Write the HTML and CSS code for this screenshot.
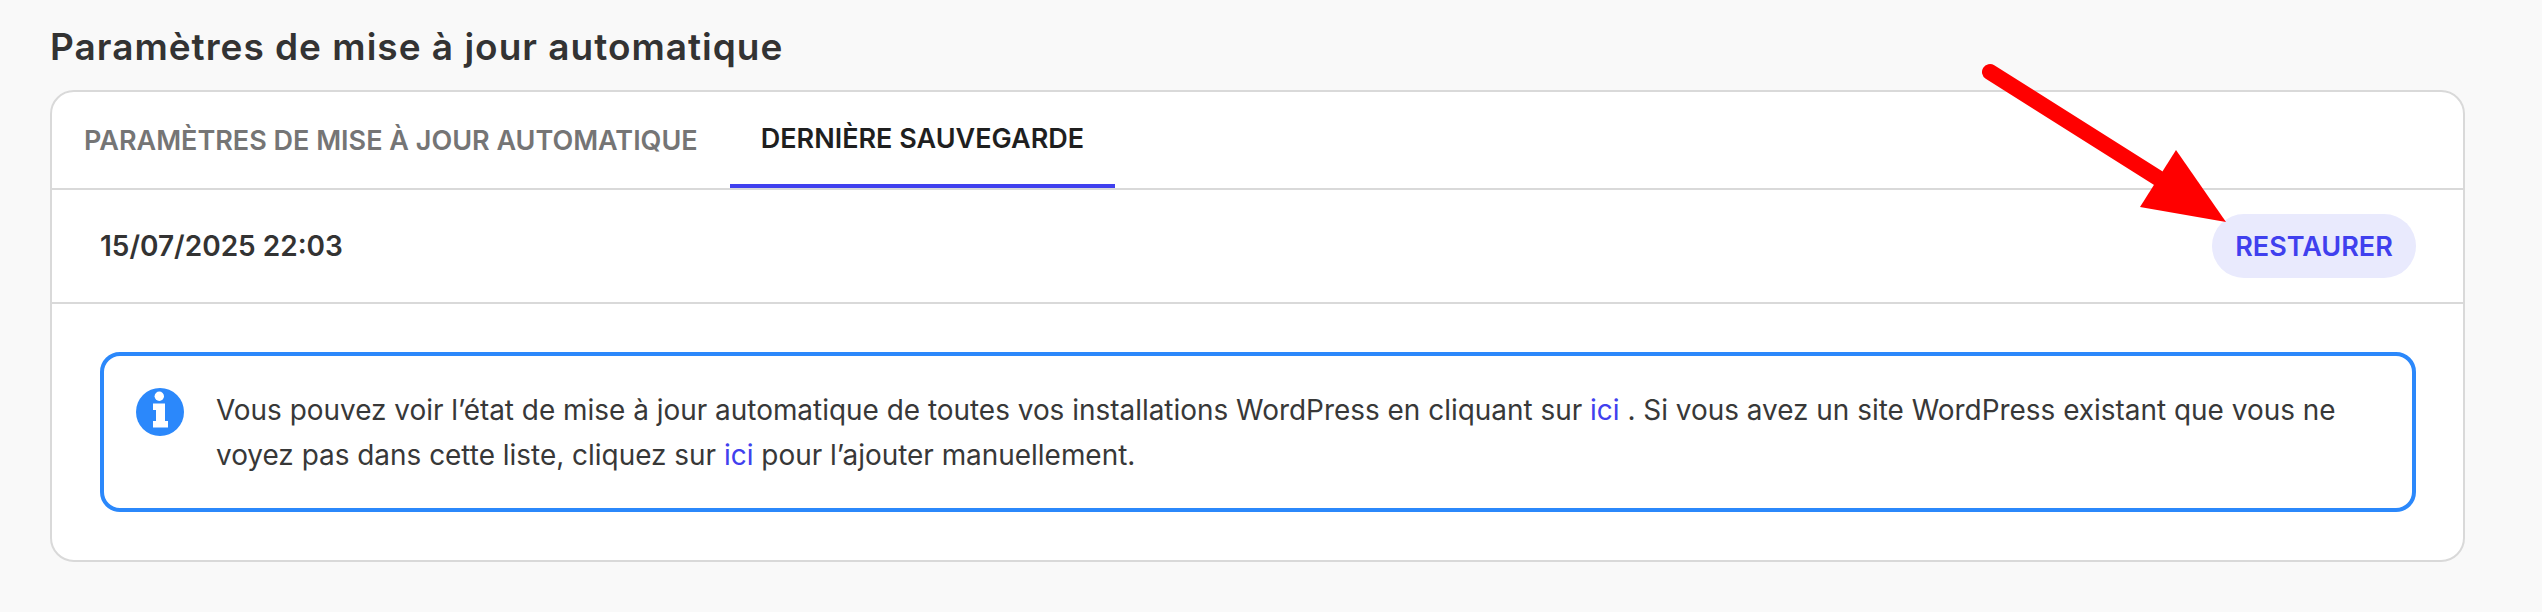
FILE: index.html
```html
<!DOCTYPE html>
<html lang="fr">
<head>
    <meta charset="utf-8">
    <title>Paramètres de mise à jour automatique</title>
    <link rel="stylesheet" href="styles.css">
</head>
<body>
    <h1 class="page-title">Paramètres de mise à jour automatique</h1>
    <div class="card">
        <div class="tabs">
            <a class="tab">PARAMÈTRES DE MISE À JOUR AUTOMATIQUE</a>
            <a class="tab active">DERNIÈRE SAUVEGARDE</a>
        </div>
        <div class="backup-row">
            <span class="backup-date">15/07/2025 22:03</span>
            <button class="btn-restore">RESTAURER</button>
        </div>
        <div class="card-body">
            <div class="alert">
                <svg class="alert-icon" viewBox="0 0 48 48" width="48" height="48">
                    <circle cx="24" cy="24" r="24" fill="#2b88fb"/>
                    <circle cx="23.3" cy="8.3" r="4.7" fill="#fff"/>
                    <path d="M17 15.5h12V33h3v6.5H17V33h3V22h-3z" fill="#fff"/>
                </svg>
                <p class="alert-text">Vous pouvez voir l’état de mise à jour automatique de toutes vos installations WordPress en cliquant sur <a class="link">ici</a> . Si vous avez un site WordPress existant que vous ne voyez pas dans cette liste, cliquez sur <a class="link">ici</a> pour l’ajouter manuellement.</p>
            </div>
        </div>
    </div>
    <!-- annotation drawn over the screenshot -->
    <svg class="arrow" viewBox="0 0 2542 612" width="2542" height="612">
        <path d="M1990 72L2158 178" stroke="#ff0000" stroke-width="16" stroke-linecap="round" fill="none"/>
        <polygon points="2176,150 2226,222 2140,207" fill="#ff0000"/>
    </svg>
</body>
</html>
```

FILE: styles.css
```css
* {
    margin: 0;
    padding: 0;
    box-sizing: border-box;
}

body {
    position: relative;
    width: 2542px;
    height: 612px;
    padding: 22px 77px 0 50px;
    overflow: hidden;
    background-color: #f9f9f9;
    font-family: 'Inter', sans-serif;
    color: #333;
}

.page-title {
    height: 68px;
    font-size: 37px;
    line-height: 50px;
    font-weight: 600;
    letter-spacing: 1px;
    color: #333;
}

.card {
    background-color: #fff;
    border: 2px solid #d9d9d9;
    border-radius: 24px;
    height: 472px;
}

.tabs {
    display: flex;
    height: 98px;
    padding-left: 32px;
    border-bottom: 2px solid #d9d9d9;
}

.tab {
    display: flex;
    align-items: center;
    height: 96px;
    padding: 0 31px;
    font-size: 27px;
    font-weight: 600;
    color: #757575;
}

.tab:first-child {
    padding: 0 32px 0 0;
}

.tab.active {
    color: #1f1f1f;
    border-bottom: 4px solid #4040ee;
}

.backup-row {
    display: flex;
    justify-content: space-between;
    align-items: center;
    height: 114px;
    padding: 0 47px 0 48px;
    border-bottom: 2px solid #d9d9d9;
}

.backup-date {
    font-size: 28px;
    font-weight: 600;
    color: #333;
}

.btn-restore {
    width: 204px;
    height: 64px;
    border: none;
    border-radius: 32px;
    background-color: #e9eafd;
    color: #4040ee;
    font-family: 'Inter', sans-serif;
    font-size: 27px;
    font-weight: 600;
}

.card-body {
    padding: 48px 47px 0 48px;
}

.alert {
    display: flex;
    gap: 32px;
    height: 160px;
    padding: 32px 32px 0 32px;
    border: 4px solid #2b88fb;
    border-radius: 20px;
}

.alert-icon {
    flex-shrink: 0;
}

.alert-text {
    font-size: 27.93px;
    line-height: 45px;
    color: #383838;
}

.link {
    color: #4040ee;
}

.arrow {
    position: absolute;
    top: 0;
    left: 0;
    pointer-events: none;
}
```
